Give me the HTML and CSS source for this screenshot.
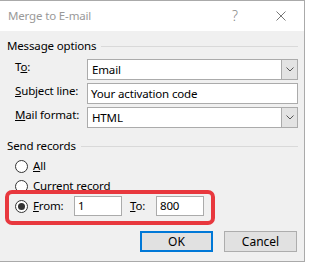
FILE: index.html
```html
<!DOCTYPE html>
<html lang="en">
<head>
    <meta charset="UTF-8">
    <title>Merge to E-mail</title>
    <link rel="stylesheet" href="styles.css">
</head>
<body>
    <div class="window">
        <div class="titlebar">
            <span class="title">Merge to E-mail</span>
            <span class="caption-btn help">?</span>
            <span class="caption-btn close">
                <svg width="10" height="10" viewBox="0 0 10 10"><path d="M0.5 0.5 L9.5 9.5 M9.5 0.5 L0.5 9.5" stroke="#777" stroke-width="1" fill="none"/></svg>
            </span>
        </div>
        <div class="content">
            <div class="group-head"><span>Message options</span></div>
            <div class="fields">
                <div class="field">
                    <label>T<u>o</u>:</label>
                    <div class="combo"><span class="value">Email</span><span class="drop"><svg width="8" height="5" viewBox="0 0 8 5"><path d="M0.5 0.5 L4 4 L7.5 0.5" stroke="#555" fill="none"/></svg></span></div>
                </div>
                <div class="field">
                    <label><u>S</u>ubject line:</label>
                    <div class="textbox">Your activation code</div>
                </div>
                <div class="field">
                    <label><u>M</u>ail format:</label>
                    <div class="combo"><span class="value">HTML</span><span class="drop"><svg width="8" height="5" viewBox="0 0 8 5"><path d="M0.5 0.5 L4 4 L7.5 0.5" stroke="#555" fill="none"/></svg></span></div>
                </div>
            </div>

            <div class="group-head records"><span>Send records</span></div>
            <div class="radios">
                <div class="radio-row"><span class="radio"></span><span><u>A</u>ll</span></div>
                <div class="radio-row"><span class="radio"></span><span>Current record</span></div>
                <div class="radio-row range">
                    <span class="radio checked"></span>
                    <span class="range-label"><u>F</u>rom:</span>
                    <div class="textbox small">1</div>
                    <span class="range-label to"><u>T</u>o:</span>
                    <div class="textbox small">800</div>
                </div>
                <div class="highlight"></div>
            </div>

            <div class="buttons">
                <button class="btn default">OK</button>
                <button class="btn">Cancel</button>
            </div>
        </div>
    </div>
</body>
</html>
```

FILE: styles.css
```css
* {
    margin: 0;
    padding: 0;
    box-sizing: border-box;
}

body {
    font-family: 'Noto Sans', 'Open Sans', sans-serif;
    font-size: 11.5px;
    letter-spacing: -0.15px;
    line-height: 16px;
    background: #fff;
    color: #000;
}

u {
    text-decoration-thickness: 1px;
    text-underline-offset: 1px;
}

.window {
    width: 305px;
    height: 262px;
    background: #f0f0f0;
    border-top: 1px solid #aaa;
    border-right: 1px solid #aaa;
    border-bottom: 1px solid #aaa;
    display: flex;
    flex-direction: column;
}

/* Title bar */
.titlebar {
    height: 30px;
    background: #fff;
    display: flex;
    align-items: center;
    padding-left: 8px;
}

.title {
    color: #999;
    flex: 1;
}

.caption-btn {
    width: 46px;
    height: 30px;
    display: flex;
    align-items: center;
    justify-content: center;
    color: #888;
}

.help {
    font-size: 14px;
    font-weight: 300;
}

/* Dialog body */
.content {
    position: relative;
    flex: 1;
    padding: 7px 6px 0 7px;
}

.group-head {
    display: flex;
    align-items: center;
    gap: 5px;
}

.group-head::after {
    content: "";
    flex: 1;
    height: 1px;
    background: #d9d9d9;
}

.fields {
    display: flex;
    flex-direction: column;
    gap: 3px;
    margin-top: 5px;
    padding-left: 8px;
}

.field {
    display: flex;
    align-items: center;
    height: 21px;
}

.field label {
    width: 72px;
    align-self: flex-start;
}

.combo,
.textbox {
    flex: 1;
    height: 21px;
    background: #fff;
    border: 1px solid #ababab;
    display: flex;
    align-items: center;
    padding-left: 3px;
}

.combo .value {
    flex: 1;
    padding-left: 1px;
}

.drop {
    width: 16px;
    height: 19px;
    background: #e3e3e3;
    border-left: 1px solid #ababab;
    display: flex;
    align-items: center;
    justify-content: center;
}

.records {
    margin-top: 10px;
}

/* Radio buttons */
.radios {
    margin-top: 2px;
    padding-left: 8px;
}

.radio-row {
    display: flex;
    align-items: center;
    gap: 5px;
    height: 20px;
}

.radio {
    width: 13px;
    height: 13px;
    border: 1px solid #333;
    border-radius: 50%;
    background: #fff;
    display: flex;
    align-items: center;
    justify-content: center;
}

.radio.checked::after {
    content: "";
    width: 7px;
    height: 7px;
    border-radius: 50%;
    background: #333;
}

.range {
    gap: 0;
}

.range .radio {
    margin-right: 5px;
}

.range-label {
    width: 41px;
}

.range-label.to {
    width: 26px;
    margin-left: 8px;
}

.textbox.small {
    flex: none;
    width: 48px;
    height: 20px;
}

/* annotation drawn over the dialog */
.highlight {
    position: absolute;
    left: 5px;
    top: 159px;
    width: 210px;
    height: 35px;
    border: 4px solid #e8383e;
    border-radius: 7px;
}

/* Buttons */
.buttons {
    display: flex;
    justify-content: flex-end;
    gap: 11px;
    margin-top: 15px;
    padding-right: 1px;
}

.btn {
    width: 73px;
    height: 21px;
    font-family: inherit;
    font-size: 12px;
    background: #e1e1e1;
    border: 1px solid #adadad;
    color: #000;
}

.btn.default {
    border: 2px solid #0078d7;
}
```
